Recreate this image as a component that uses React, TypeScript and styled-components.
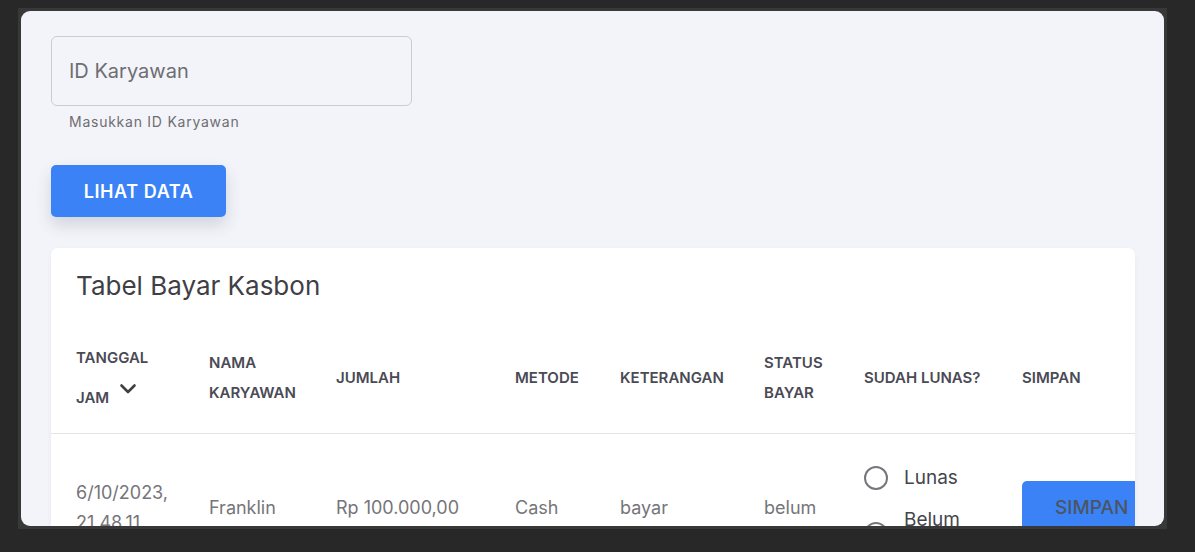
import React from "react";
import styled, { createGlobalStyle } from "styled-components";

const Global = createGlobalStyle`
  html, body { margin: 0; padding: 0; background: #282828; }
  body { font-family: Inter, "Noto Sans", sans-serif; }
  * { box-sizing: border-box; }
`;

const Frame = styled.div`
  margin: 8px 0 0 18px;
  width: 1149px;
  height: 521px;
  background: #383838;
  padding: 3px;
`;

const Panel = styled.div`
  height: 515px;
  background: #f3f4f9;
  border-radius: 9px;
  overflow: hidden;
  padding: 25px 29px 0 30px;
`;

const Field = styled.div`
  width: 361px;
  display: flex;
  flex-direction: column;
`;

const Input = styled.input`
  height: 70px;
  width: 100%;
  border: 1px solid #cbcbd0;
  border-radius: 6px;
  background: transparent;
  padding: 0 17px;
  font-family: Inter, sans-serif;
  font-size: 20px;
  color: #333;
  outline: none;
  &::placeholder { color: #6e6e72; }
`;

const Helper = styled.span`
  margin-top: 7px;
  padding-left: 18px;
  font-size: 14px;
  line-height: 17px;
  color: #6e6e72;
  letter-spacing: 0.75px;
`;

const PrimaryButton = styled.button`
  margin-top: 35px;
  width: 175px;
  height: 52px;
  border: none;
  border-radius: 5px;
  background: #3b82f6;
  color: #fff;
  font-family: Inter, sans-serif;
  font-size: 18px;
  font-weight: 600;
  letter-spacing: 0.6px;
  box-shadow: 0 8px 16px rgba(40, 50, 80, 0.16);
`;

const Card = styled.div`
  margin-top: 31px;
  background: #fff;
  border-radius: 7px;
  box-shadow: 0 2px 6px rgba(0, 0, 0, 0.04);
  overflow: hidden;
`;

const CardTitle = styled.h2`
  margin: 0;
  padding: 23px 25px 0;
  font-size: 26px;
  line-height: 30px;
  font-weight: 400;
  color: #3f3f46;
`;

const Table = styled.table`
  border-collapse: collapse;
  table-layout: fixed;
  width: 1146px;
  margin-top: 22px;
`;

const Th = styled.th`
  height: 110px;
  padding: 0 8px 0 25px;
  text-align: left;
  vertical-align: middle;
  font-size: 15px;
  font-weight: 600;
  line-height: 30px;
  text-transform: uppercase;
  color: #4a4a55;
  border-bottom: 1px solid #e4e4e7;
`;

const SortIcon = styled.svg`
  width: 22px;
  height: 30px;
  margin-left: 8px;
  vertical-align: 0;
`;

const Td = styled.td<{ $tight?: boolean }>`
  padding: 24px 8px ${(p) => (p.$tight ? "20px" : "24px")} 25px;
  vertical-align: middle;
  font-size: 18px;
  line-height: 30px;
  color: #75757a;
`;

const RadioGroup = styled.div`
  display: flex;
  flex-direction: column;
  gap: 8px;
`;

const RadioItem = styled.label`
  display: flex;
  align-items: center;
  gap: 16px;
  min-height: 40px;
  font-size: 19px;
  line-height: 28px;
  color: #45454d;
`;

const RadioCircle = styled.span`
  flex: none;
  width: 24px;
  height: 24px;
  border: 2px solid #76767c;
  border-radius: 50%;
`;

const SaveButton = styled.button`
  width: 150px;
  height: 54px;
  border: none;
  border-radius: 5px;
  background: #3b82f6;
  color: #4b5563;
  font-family: Inter, sans-serif;
  font-size: 19px;
  font-weight: 500;
  text-align: left;
  padding: 0 0 0 33px;
`;

const columns = [133, 127, 179, 105, 144, 100, 158, 200];

export default function App() {
  return (
    <>
      <Global />
      <Frame>
        <Panel>
          <Field>
            <Input placeholder="ID Karyawan" />
            <Helper>Masukkan ID Karyawan</Helper>
          </Field>
          <PrimaryButton>LIHAT DATA</PrimaryButton>
          <Card>
            <CardTitle>Tabel Bayar Kasbon</CardTitle>
            <Table>
              <colgroup>
                {columns.map((w, i) => (
                  <col key={i} style={{ width: w }} />
                ))}
              </colgroup>
              <thead>
                <tr>
                  <Th>
                    Tanggal Jam
                    <SortIcon viewBox="0 0 22 30" fill="none" stroke="#3f3f46" strokeWidth="2.6" strokeLinecap="round" strokeLinejoin="round">
                      <path d="M4.5 12.5l6.5 6.5 6.5-6.5" />
                    </SortIcon>
                  </Th>
                  <Th>Nama Karyawan</Th>
                  <Th>Jumlah</Th>
                  <Th>Metode</Th>
                  <Th>Keterangan</Th>
                  <Th>Status Bayar</Th>
                  <Th>Sudah Lunas?</Th>
                  <Th>Simpan</Th>
                </tr>
              </thead>
              <tbody>
                <tr>
                  <Td>6/10/2023, 21.48.11</Td>
                  <Td>Franklin</Td>
                  <Td>Rp 100.000,00</Td>
                  <Td>Cash</Td>
                  <Td>bayar</Td>
                  <Td>belum</Td>
                  <Td $tight>
                    <RadioGroup>
                      <RadioItem>
                        <RadioCircle />
                        Lunas
                      </RadioItem>
                      <RadioItem>
                        <RadioCircle />
                        Belum Lunas
                      </RadioItem>
                    </RadioGroup>
                  </Td>
                  <Td>
                    <SaveButton>SIMPAN</SaveButton>
                  </Td>
                </tr>
              </tbody>
            </Table>
          </Card>
        </Panel>
      </Frame>
    </>
  );
}
